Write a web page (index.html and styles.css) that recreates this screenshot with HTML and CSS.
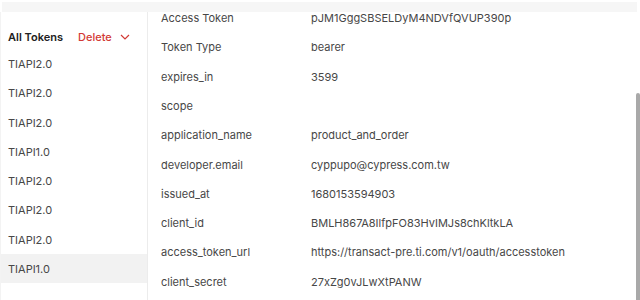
FILE: index.html
```html
<!DOCTYPE html>
<html lang="en">
<head>
    <meta charset="UTF-8" />
    <title>Tokens</title>
    <link rel="stylesheet" href="styles.css">
</head>
<body>
    <div class="top-strip"></div>
    <div class="layout">
        <aside class="token-list">
            <div class="list-header">
                <span class="list-title">All Tokens</span>
                <button class="delete-btn">Delete
                    <svg width="10" height="6" viewBox="0 0 10 6"><path d="M1 1l4 4 4-4" fill="none" stroke="#d23a35" stroke-width="1.2"/></svg>
                </button>
            </div>
            <div class="token-item">TIAPI2.0</div>
            <div class="token-item">TIAPI2.0</div>
            <div class="token-item">TIAPI2.0</div>
            <div class="token-item">TIAPI1.0</div>
            <div class="token-item">TIAPI2.0</div>
            <div class="token-item">TIAPI2.0</div>
            <div class="token-item">TIAPI2.0</div>
            <div class="token-item selected">TIAPI1.0</div>
        </aside>
        <section class="token-details">
            <div class="detail-row first"><span class="detail-key">Access Token</span><span class="detail-value">pJM1GggSBSELDyM4NDVfQVUP390p</span></div>
            <div class="detail-row"><span class="detail-key">Token Type</span><span class="detail-value">bearer</span></div>
            <div class="detail-row"><span class="detail-key">expires_in</span><span class="detail-value">3599</span></div>
            <div class="detail-row"><span class="detail-key">scope</span><span class="detail-value"></span></div>
            <div class="detail-row"><span class="detail-key">application_name</span><span class="detail-value">product_and_order</span></div>
            <div class="detail-row"><span class="detail-key">developer.email</span><span class="detail-value">cyppupo@cypress.com.tw</span></div>
            <div class="detail-row"><span class="detail-key">issued_at</span><span class="detail-value">1680153594903</span></div>
            <div class="detail-row"><span class="detail-key">client_id</span><span class="detail-value">BMLH867A8IlfpFO83HvIMJs8chKltkLA</span></div>
            <div class="detail-row"><span class="detail-key">access_token_url</span><span class="detail-value">https://transact-pre.ti.com/v1/oauth/accesstoken</span></div>
            <div class="detail-row"><span class="detail-key">client_secret</span><span class="detail-value">27xZg0vJLwXtPANW</span></div>
            <div class="scroll-thumb"></div>
        </section>
    </div>
</body>
</html>
```

FILE: styles.css
```css
:root {
    --text-color: #474747;
    --title-color: #212121;
    --danger-color: #d23a35;
    --border-color: #ececec;
    --selected-bg: #f2f2f2;
    --strip-bg: #f6f6f6;
}
body {
    font-family: 'Inter', sans-serif;
    font-size: 11px;
    color: var(--text-color);
    background-color: #ffffff;
    margin: 0;
    height: 300px;
    overflow: hidden;
}
.top-strip {
    height: 10px;
    margin: 2px 3px 0 2px;
    background-color: var(--strip-bg);
}
.layout {
    display: flex;
    height: 288px;
    border-left: 1px solid #f3f3f3;
}
.token-list {
    width: 146px;
    flex-shrink: 0;
    border-right: 1px solid var(--border-color);
}
.list-header {
    display: flex;
    align-items: center;
    height: 16px;
    padding: 17px 0 4px 7px;
}
.list-title {
    font-weight: 600;
    color: var(--title-color);
    width: 70px;
}
.delete-btn {
    display: flex;
    align-items: center;
    gap: 8px;
    border: none;
    background: none;
    padding: 0;
    font-family: inherit;
    font-size: 11px;
    font-weight: 500;
    color: var(--danger-color);
}
.token-item {
    height: 29.3px;
    line-height: 30.3px;
    padding-left: 7px;
}
.token-item.selected {
    background-color: var(--selected-bg);
}
.token-details {
    position: relative;
    flex-grow: 1;
    overflow: hidden;
}
.detail-row {
    display: flex;
    height: 29.3px;
    line-height: 29.3px;
    padding-left: 13px;
}
.detail-row.first {
    height: 21.4px;
    line-height: 12px;
}
.detail-key {
    width: 150px;
    flex-shrink: 0;
}
.scroll-thumb {
    position: absolute;
    right: 0;
    top: 81px;
    width: 4px;
    height: 220px;
    background-color: #a9a9a9;
    border-radius: 2px 2px 0 0;
}
```
